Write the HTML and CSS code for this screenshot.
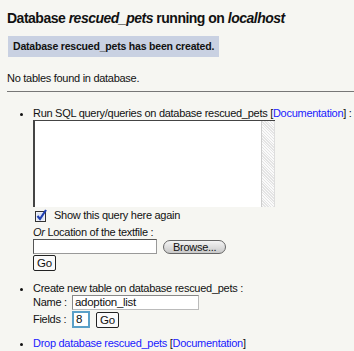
FILE: index.html
```html
<!DOCTYPE html>
<html>
<head>
<meta charset="utf-8">
<link rel="stylesheet" href="styles.css">
</head>
<body>
<h1 class="title">Database <i>rescued_pets</i> running on <i>localhost</i></h1>
<div class="notice">Database rescued_pets has been created.</div>
<p class="empty">No tables found in database.</p>
<hr class="rule">
<ul class="actions">
  <li class="item">
    <div class="line">Run SQL query/queries on database rescued_pets [<a class="link" href="#">Documentation</a>] :</div>
    <div class="sqlbox"><div class="sqlarea"></div><div class="scroll"></div></div>
    <label class="check"><span class="cb"><svg width="13" height="13" viewBox="0 0 13 13"><rect x="0.5" y="2.5" width="10" height="10" fill="#fff" stroke="#333"/><rect x="1.5" y="3.5" width="8" height="8" fill="#dde4f4"/><path d="M2.5 7 L5 10 L11 1" fill="none" stroke="#1f3fb0" stroke-width="2.2"/></svg></span>Show this query here again</label>
    <div class="line"><i>Or</i> Location of the textfile :</div>
    <div class="filerow"><span class="field filefield"></span><span class="pill">Browse...</span></div>
    <div class="gorow"><span class="btn">Go</span></div>
  </li>
  <li class="item item2">
    <div class="line">Create new table on database rescued_pets :</div>
    <div class="formrow"><span class="lbl">Name :</span><span class="field namefield">adoption_list</span></div>
    <div class="formrow frow2"><span class="lbl">Fields :</span><span class="field numfield">8</span><span class="btn">Go</span></div>
  </li>
  <li class="item item3">
    <a class="link" href="#">Drop database rescued_pets</a> [<a class="link" href="#">Documentation</a>]
  </li>
</ul>
</body>
</html>
```
FILE: styles.css
```css
html, body {
  margin: 0;
  padding: 0;
}
body {
  background: #f6f6f2;
  font-family: "Liberation Sans", Arial, sans-serif;
  font-size: 11px;
  letter-spacing: -0.28px;
  color: #111;
  padding: 0 0 0 7px;
  width: 347px;
  overflow: hidden;
  white-space: nowrap;
}
.title {
  font-size: 14px;
  letter-spacing: -0.5px;
  font-weight: bold;
  margin: 0;
  padding-top: 9px;
  line-height: 19px;
  height: 27px;
}
.notice {
  display: inline-block;
  margin-left: 1px;
  background: #c9d1e2;
  font-weight: bold;
  font-size: 10.5px;
  letter-spacing: -0.2px;
  padding: 5px 5px 5px 5px;
  line-height: 11px;
}
.empty {
  margin: 15px 0 0 0;
  line-height: 13px;
}
.rule {
  margin: 6px 0 0 0;
  border: 0;
  border-top: 1px solid #777;
  height: 0;
}
.actions {
  list-style: disc;
  margin: 15px 0 0 0;
  padding-left: 26px;
}
.item { line-height: 13px; }
.line { line-height: 13px; }
.link { color: #1a1aff; text-decoration: none; }
.sqlbox {
  display: flex;
  width: 240px;
  height: 86px;
  border-top: 1px solid #444;
  border-left: 2px solid #444;
  background: #fff;
}
.sqlarea { flex: 1; }
.scroll {
  width: 12px;
  border-left: 1px solid #ccc;
  border-right: 1px solid #ddd;
  background: repeating-linear-gradient(45deg, #e4e4e4 0 1px, #fafafa 1px 2px);
}
.check {
  display: flex;
  align-items: center;
  height: 16px;
  margin-bottom: 3px;
}
.cb { width: 19px; display: inline-flex; padding-left: 2px; }
.filerow {
  display: flex;
  align-items: center;
  gap: 6px;
  margin-top: 0;
}
.field {
  display: inline-block;
  background: #fff;
  border: 1px solid #999;
  border-top-color: #555;
  border-left-color: #555;
  box-sizing: border-box;
  height: 15px;
  line-height: 13px;
  padding-left: 2px;
  font-size: 11.5px;
}
.filefield { width: 124px; }
.pill {
  display: inline-block;
  border: 1px solid #666;
  border-radius: 7px;
  background: linear-gradient(#f4f4f4, #c8c8c8);
  height: 12px;
  line-height: 12px;
  padding: 0 9px;
  font-size: 11px;
}
.gorow { margin-top: 1px; }
.btn {
  display: inline-block;
  border: 1px solid #222;
  border-radius: 2px;
  background: #fafafa;
  height: 14px;
  line-height: 14px;
  padding: 0 3px;
  font-size: 11.5px;
}
.item2 { margin-top: 11px; }
.formrow {
  display: flex;
  align-items: center;
  gap: 6px;
  margin-top: 0;
  height: 15px;
}
.frow2 { margin-top: 1px; height: 17px; }
.lbl { width: 33px; }
.namefield { width: 127px; border-color: #888 #bbb #bbb #888; }
.numfield { width: 18px; border: 2px solid #5aa0c8; height: 17px; }
.item3 { margin-top: 9px; }
```
